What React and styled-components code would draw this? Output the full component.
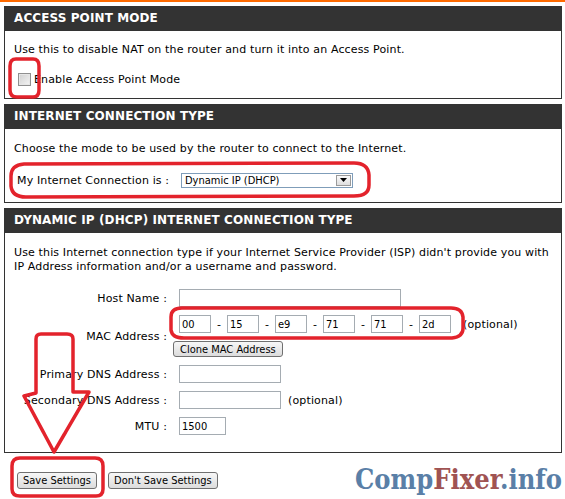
import styled, { createGlobalStyle } from 'styled-components';

const GlobalStyle = createGlobalStyle`
  body {
    margin: 0;
    background: #fff;
    font-family: "DejaVu Sans", sans-serif;
    font-size: 11px;
    letter-spacing: 0.14px;
    color: #000;
  }
`;

const Page = styled.div`
  position: relative;
  width: 565px;
  height: 499px;
  overflow: hidden;
  background: #fff;
`;

const TopLine = styled.div`
  height: 2px;
  background: #ff6a00;
  margin-bottom: 4px;
`;

const Panel = styled.section`
  margin: 0 3px 5px 4px;
`;

const PanelHeader = styled.h2`
  margin: 0;
  height: 25px;
  line-height: 25px;
  padding-left: 10px;
  background: #333;
  color: #fff;
  font-family: "DejaVu Sans", sans-serif;
  font-size: 12px;
  font-weight: bold;
  letter-spacing: 0.1px;
`;

const PanelBody = styled.div`
  border: 1px solid #333;
  border-top: none;
  padding: ${p => p.$top}px 9px ${p => p.$bottom}px 9px;
  background: #fff;
`;

const Text = styled.p`
  margin: 0;
  line-height: 14px;
`;

const CheckRow = styled.label`
  display: flex;
  align-items: center;
  height: 18px;
  margin-top: 13px;
`;

const CheckBox = styled.input`
  appearance: none;
  width: 13px;
  height: 13px;
  margin: 0 3px 0 4px;
  border: 1px solid #8f8f8f;
  background: linear-gradient(135deg, #cfcfcf, #f4f4f4);
  box-shadow: inset 0 0 0 1px #e6e6e6;
`;

const SelectRow = styled.div`
  display: flex;
  align-items: center;
  height: 18px;
  margin-top: 15px;
  padding-left: 3px;
`;

const RowLabel = styled.span`
  width: 150px;
  margin-right: 14px;
  white-space: nowrap;
`;

const SelectBox = styled.div`
  box-sizing: border-box;
  display: flex;
  align-items: center;
  justify-content: space-between;
  width: 172px;
  height: 15px;
  padding: 0 1px 0 3px;
  border: 1px solid #7f9db9;
  background: #fff;
  font-family: "DejaVu Sans Condensed", "DejaVu Sans", sans-serif;
  font-stretch: condensed;
  letter-spacing: 0;
`;

const SelectButton = styled.span`
  box-sizing: border-box;
  display: flex;
  align-items: center;
  justify-content: center;
  width: 15px;
  height: 11px;
  border: 1px solid #9a9a9a;
  background: linear-gradient(#fafafa, #dedede);
`;

const FormGrid = styled.div`
  display: grid;
  grid-template-columns: 153px 1fr;
  column-gap: 6px;
  row-gap: 8px;
  align-items: center;
  margin-top: 15px;
`;

const FieldLabel = styled.span`
  text-align: right;
  white-space: nowrap;
`;

const FieldCell = styled.div`
  display: flex;
  flex-direction: column;
  align-items: flex-start;
  gap: 8px;
`;

const InputLine = styled.div`
  display: flex;
  align-items: center;
  padding-left: 6px;
`;

const TextInput = styled.input`
  box-sizing: border-box;
  width: ${p => p.$w}px;
  height: 18px;
  margin: 0;
  padding: 0 2px;
  border: 1px solid #a5acb2;
  font-family: "DejaVu Sans Condensed", "DejaVu Sans", sans-serif;
  font-stretch: condensed;
  font-size: 11px;
  color: #000;
  background: #fff;
`;

const Dash = styled.span`
  width: 16px;
  text-align: center;
`;

const Note = styled.span`
  margin-left: ${p => p.$gap}px;
`;

const Button = styled.button`
  box-sizing: border-box;
  height: ${p => p.$h || 17}px;
  padding: 0 ${p => p.$pad || 5}px;
  border: 1px solid #707070;
  border-radius: 3px;
  background: linear-gradient(#f7f7f7, #dcdcdc);
  font-family: "DejaVu Sans Condensed", "DejaVu Sans", sans-serif;
  font-stretch: condensed;
  font-size: 11px;
  letter-spacing: 0;
  color: #000;
  line-height: 1;
`;

const Footer = styled.div`
  display: flex;
  align-items: center;
  gap: 11px;
  height: 17px;
  padding: 14px 3px 0 17px;
`;

const Brand = styled.span`
  margin-left: auto;
  line-height: 17px;
  font-family: "DejaVu Serif Condensed", "DejaVu Serif", serif;
  font-stretch: condensed;
  font-weight: bold;
  font-size: 27px;
  letter-spacing: 0;
  color: #5a7fa7;
  padding-bottom: 3px;
`;

const BrandRed = styled.span`
  color: #a05352;
`;

const Marks = styled.svg`
  position: absolute;
  left: 0;
  top: 0;
  pointer-events: none;
`;

const macParts = ['00', '15', 'e9', '71', '71', '2d'];

export default function App() {
  return (
    <Page>
      <GlobalStyle />
      <TopLine />

      <Panel>
        <PanelHeader>ACCESS POINT MODE</PanelHeader>
        <PanelBody $top={12} $bottom={10}>
          <Text>Use this to disable NAT on the router and turn it into an Access Point.</Text>
          <CheckRow>
            <CheckBox type="checkbox" />
            Enable Access Point Mode
          </CheckRow>
        </PanelBody>
      </Panel>

      <Panel>
        <PanelHeader>INTERNET CONNECTION TYPE</PanelHeader>
        <PanelBody $top={13} $bottom={13}>
          <Text>Choose the mode to be used by the router to connect to the Internet.</Text>
          <SelectRow>
            <RowLabel>My Internet Connection is :</RowLabel>
            <SelectBox>
              Dynamic IP (DHCP)
              <SelectButton>
                <svg width="7" height="4" viewBox="0 0 7 4">
                  <path d="M0 0H7L3.5 4Z" fill="#000" />
                </svg>
              </SelectButton>
            </SelectBox>
          </SelectRow>
        </PanelBody>
      </Panel>

      <Panel>
        <PanelHeader>DYNAMIC IP (DHCP) INTERNET CONNECTION TYPE</PanelHeader>
        <PanelBody $top={13} $bottom={17}>
          <Text>
            Use this Internet connection type if your Internet Service Provider (ISP) didn't provide you with
            <br />
            IP Address information and/or a username and password.
          </Text>
          <FormGrid>
            <FieldLabel>Host Name :</FieldLabel>
            <FieldCell>
              <InputLine>
                <TextInput $w={222} defaultValue="" />
              </InputLine>
            </FieldCell>

            <FieldLabel>MAC Address :</FieldLabel>
            <FieldCell>
              <InputLine>
                {macParts.map((part, i) => (
                  <span key={i} style={{ display: 'contents' }}>
                    {i > 0 && <Dash>-</Dash>}
                    <TextInput $w={32} defaultValue={part} />
                  </span>
                ))}
                <Note $gap={12}>(optional)</Note>
              </InputLine>
              <Button $h={16} $pad={6}>Clone MAC Address</Button>
            </FieldCell>

            <FieldLabel>Primary DNS Address :</FieldLabel>
            <FieldCell>
              <InputLine>
                <TextInput $w={102} defaultValue="" />
              </InputLine>
            </FieldCell>

            <FieldLabel>Secondary DNS Address :</FieldLabel>
            <FieldCell>
              <InputLine>
                <TextInput $w={102} defaultValue="" />
                <Note $gap={7}>(optional)</Note>
              </InputLine>
            </FieldCell>

            <FieldLabel>MTU :</FieldLabel>
            <FieldCell>
              <InputLine>
                <TextInput $w={47} defaultValue="1500" />
              </InputLine>
            </FieldCell>
          </FormGrid>
        </PanelBody>
      </Panel>

      <Footer>
        <Button>Save Settings</Button>
        <Button>Don't Save Settings</Button>
        <Brand>
          Comp<BrandRed>Fixer</BrandRed>.info
        </Brand>
      </Footer>

      {/* red hand-drawn annotations over the page */}
      <Marks width="565" height="499" viewBox="0 0 565 499">
        <g fill="none" stroke="#e3232c" strokeWidth="3.5" strokeLinejoin="round" strokeLinecap="round">
          <path d="M16 59 Q10 59 10 66 L10 90 Q10 97 17 97 L33 97 Q39 97 39 90 L39 66 Q39 59 33 59 Z" />
          <path d="M24 164 Q11 165 11 176 L11 186 Q12 197 26 197 L354 196 Q369 196 369 185 L369 175 Q368 163 354 163 Z" />
          <path d="M182 308 Q171 308 171 317 L171 330 Q172 338 184 338 L452 338 Q463 337 463 328 L463 317 Q462 308 451 308 Z" />
          <path d="M36 393 L36 339 Q36 334 41 334 L67 334 Q73 334 73 339 L73 392 L89 392 L54 452 L24 396 Z" />
          <path d="M20 458 Q12 458 12 466 L12 489 Q12 496 20 496 L96 496 Q103 496 103 489 L103 466 Q103 458 95 458 Z" />
        </g>
      </Marks>
    </Page>
  );
}
